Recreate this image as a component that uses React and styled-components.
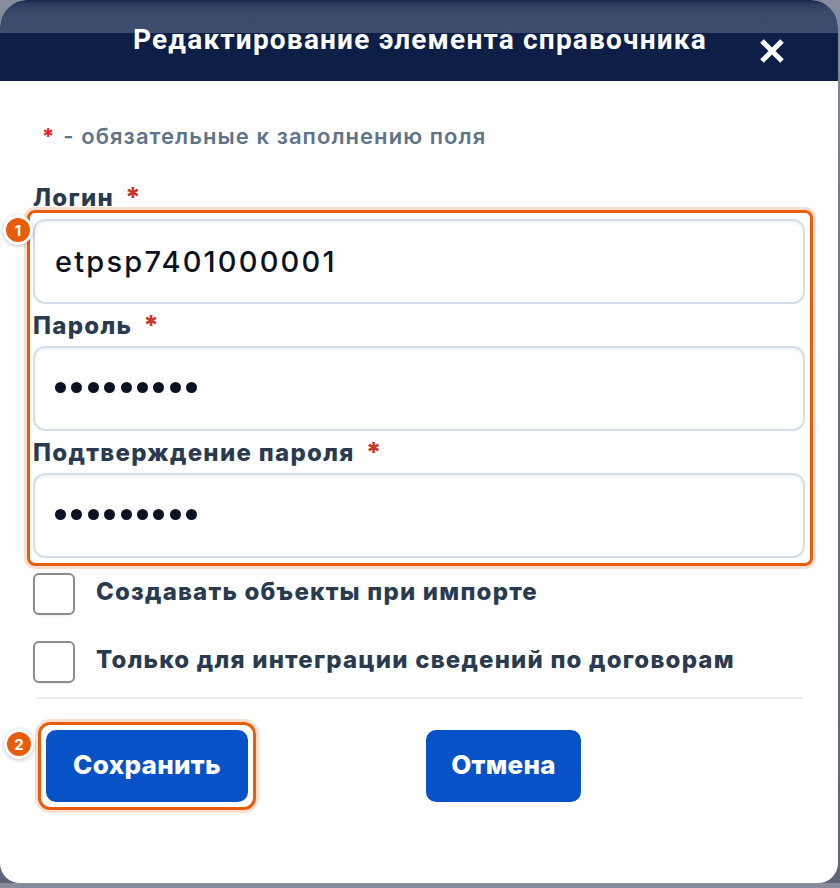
import React, { useState } from 'react';
import styled, { createGlobalStyle } from 'styled-components';

const GlobalStyle = createGlobalStyle`
  html, body {
    margin: 0;
    padding: 0;
  }
  body {
    background: linear-gradient(to bottom, #868c9c 0%, #6a7184 40%, #5d6577 100%);
    font-family: 'Inter', 'Liberation Sans', sans-serif;
  }
`;

const Modal = styled.div`
  width: 838px;
  background: #ffffff;
  border-radius: 27px 27px 20px 20px;
  overflow: hidden;
`;

const Header = styled.div`
  display: grid;
  grid-template-columns: 1fr auto 1fr;
  align-items: center;
  height: 81px;
  padding-left: 2px;
  background: linear-gradient(
    to bottom,
    #16244b 0px,
    #2e3c60 4px,
    #3a4869 12px,
    #3f4d6e 33px,
    #0e1f47 33px
  );
`;

const Title = styled.h2`
  grid-column: 2;
  margin: 0 0 2px;
  font-family: 'Roboto', 'Liberation Sans', sans-serif;
  font-size: 28px;
  font-weight: 700;
  letter-spacing: 1.2px;
  color: #ffffff;
  white-space: nowrap;
`;

const CloseButton = styled.button`
  grid-column: 3;
  justify-self: end;
  align-self: end;
  margin: 0 53px 18px 0;
  padding: 0;
  border: none;
  background: none;
  display: flex;
  cursor: pointer;
`;

const Body = styled.div`
  padding: 43px 33px 73px;
`;

const Note = styled.p`
  margin: 0 0 37px 9px;
  font-size: 22px;
  line-height: 24px;
  font-weight: 600;
  letter-spacing: 1.05px;
  color: #5f7389;
`;

const NoteStar = styled.span`
  color: #ee1c1c;
  font-weight: 700;
  margin-right: 8px;
`;

const Label = styled.div`
  display: flex;
  align-items: center;
  height: ${(p) => (p.$inner ? '42px' : '24px')};
  font-size: 24px;
  font-weight: 800;
  letter-spacing: 1.3px;
  color: #2a3b50;
`;

const Star = styled.span`
  color: #c9372c;
  margin-left: 11px;
  font-size: 27px;
`;

const Highlight = styled.div`
  position: relative;
  border: 3px solid #e85d0c;
  border-radius: ${(p) => p.$radius || '8px'};
  box-shadow: 0 0 0 3px #fbdfce;
  padding: ${(p) => p.$pad};
  margin: ${(p) => p.$margin || '0'};
`;

const Badge = styled.span`
  position: absolute;
  left: ${(p) => p.$left}px;
  top: ${(p) => p.$top}px;
  width: 24px;
  height: 24px;
  border-radius: 50%;
  border: 3px solid #ffffff;
  background: #e85d0c;
  box-shadow: 0 1px 4px rgba(0, 0, 0, 0.25);
  color: #ffffff;
  font-size: 15px;
  font-weight: 700;
  display: flex;
  align-items: center;
  justify-content: center;
`;

const Field = styled.div`
  box-sizing: border-box;
  height: 85px;
  border: 2px solid #d4dee9;
  border-radius: 12px;
  box-shadow: inset 0 2px 3px rgba(20, 40, 80, 0.06);
  padding: 0 20px;
  display: flex;
  align-items: center;
  font-size: 29px;
  font-weight: 500;
  letter-spacing: 2.2px;
  color: #0c1220;
`;

const Dots = styled.div`
  display: flex;
  gap: 5.4px;
  margin-top: -2px;
`;

const Dot = styled.span`
  width: 11px;
  height: 11px;
  border-radius: 50%;
  background: #0c1220;
`;

const CheckRow = styled.label`
  display: flex;
  align-items: center;
  gap: 21px;
  margin-top: ${(p) => p.$gap}px;
  cursor: pointer;
`;

const CheckBox = styled.input`
  appearance: none;
  margin: 0;
  width: 42px;
  height: 42px;
  border: 2px solid #8b8b8b;
  border-radius: 6px;
  background: #ffffff;
  box-sizing: border-box;
  box-shadow: 0 1px 2px rgba(0, 0, 0, 0.08);
  cursor: pointer;

  &:checked {
    background: #0752c6;
    border-color: #0752c6;
  }
`;

const CheckText = styled.span`
  padding-bottom: 6px;
  font-size: 24px;
  font-weight: 800;
  letter-spacing: 1.2px;
  color: #2a3b50;
`;

const Divider = styled.hr`
  margin: 14px 3px 0;
  border: none;
  height: 2px;
  background: #e9eef3;
`;

const Actions = styled.div`
  display: flex;
  align-items: flex-start;
  gap: 170px;
  margin-top: 23px;
`;

const Button = styled.button`
  height: 72px;
  width: ${(p) => p.$width}px;
  padding: 0 0 4px;
  border: none;
  border-radius: 10px;
  background: #0752c6;
  color: #ffffff;
  font-family: 'Inter', 'Liberation Sans', sans-serif;
  font-size: 26px;
  font-weight: 800;
  letter-spacing: 0.3px;
  cursor: pointer;
  margin-top: ${(p) => p.$offset || 0}px;

  &:hover {
    background: #0a47a8;
  }
`;

function CloseIcon() {
  return (
    <svg width="26" height="24" viewBox="0 0 26 24">
      <path d="M3 2 L23 22 M23 2 L3 22" stroke="#ffffff" strokeWidth="5" strokeLinecap="butt" />
    </svg>
  );
}

function Password({ length }) {
  return (
    <Dots>
      {Array.from({ length }).map((_, i) => (
        <Dot key={i} />
      ))}
    </Dots>
  );
}

export default function App() {
  const [flags, setFlags] = useState({ create: false, contracts: false });

  const toggle = (key) => setFlags({ ...flags, [key]: !flags[key] });

  return (
    <>
      <GlobalStyle />
      <Modal>
        <Header>
          <Title>Редактирование элемента справочника</Title>
          <CloseButton aria-label="Закрыть">
            <CloseIcon />
          </CloseButton>
        </Header>

        <Body>
          <Note>
            <NoteStar>*</NoteStar>- обязательные к заполнению поля
          </Note>

          <Label>
            Логин<Star>*</Star>
          </Label>

          <Highlight $pad="6px 5px 5px 3px" $margin="1px -8px 0 -6px">
            <Badge $left={-27} $top={2}>1</Badge>
            <Field>etpsp7401000001</Field>
            <Label $inner>
              Пароль<Star>*</Star>
            </Label>
            <Field>
              <Password length={9} />
            </Field>
            <Label $inner>
              Подтверждение пароля<Star>*</Star>
            </Label>
            <Field>
              <Password length={9} />
            </Field>
          </Highlight>

          <CheckRow $gap={7}>
            <CheckBox type="checkbox" checked={flags.create} onChange={() => toggle('create')} />
            <CheckText>Создавать объекты при импорте</CheckText>
          </CheckRow>
          <CheckRow $gap={26}>
            <CheckBox type="checkbox" checked={flags.contracts} onChange={() => toggle('contracts')} />
            <CheckText>Только для интеграции сведений по договорам</CheckText>
          </CheckRow>

          <Divider />

          <Actions>
            <Highlight $pad="5px" $radius="12px" $margin="0 0 0 5px">
              <Badge $left={-37} $top={4}>2</Badge>
              <Button $width={202}>Сохранить</Button>
            </Highlight>
            <Button $width={155} $offset={8}>Отмена</Button>
          </Actions>
        </Body>
      </Modal>
    </>
  );
}
